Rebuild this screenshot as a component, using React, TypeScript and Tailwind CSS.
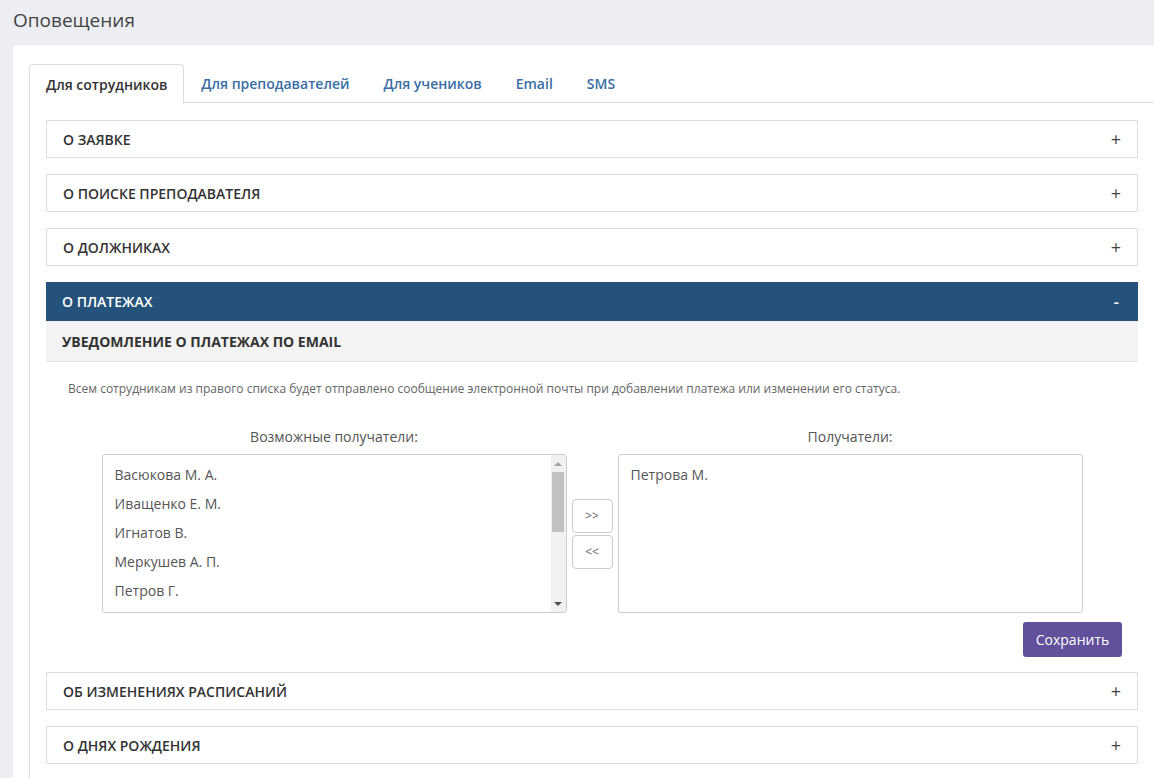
import React from "react";

// Настройки оповещений: вкладки, аккордеон с разделами и двойной список получателей.

const TABS = ["Для сотрудников", "Для преподавателей", "Для учеников", "Email", "SMS"];

const AVAILABLE = ["Васюкова М. А.", "Иващенко Е. М.", "Игнатов В.", "Меркушев А. П.", "Петров Г."];
const SELECTED = ["Петрова М."];

function Collapsed({ title }: { title: string }) {
  return (
    <div className="flex h-[38px] items-center justify-between border border-[#dddddd] bg-white pl-4 pr-[16px]">
      <span className="text-[14px] font-semibold uppercase text-[#333333]">{title}</span>
      <span className="text-[18px] leading-none text-[#444444]">+</span>
    </div>
  );
}

// Список с отрисованной полосой прокрутки справа
function ListBox({ items, scroll }: { items: string[]; scroll?: boolean }) {
  return (
    <div className="flex h-[159px] w-[465px] overflow-hidden rounded-[3px] border border-[#cccccc] bg-white">
      <ul className="flex-1 pl-3 pt-[8px]">
        {items.map((item) => (
          <li key={item} className="h-[29px] text-[14px] leading-[24px] text-[#555555]">
            {item}
          </li>
        ))}
      </ul>
      {scroll && (
        <div className="flex w-[15px] flex-col bg-[#f1f1f1]">
          <div className="flex h-[17px] items-center justify-center">
            <span className="h-0 w-0 border-x-[4px] border-b-[4px] border-x-transparent border-b-[#a3a3a3]" />
          </div>
          <div className="mx-auto h-[60px] w-[12px] bg-[#c1c1c1]" />
          <div className="flex-1" />
          <div className="flex h-[17px] items-center justify-center">
            <span className="h-0 w-0 border-x-[4px] border-t-[4px] border-x-transparent border-t-[#505050]" />
          </div>
        </div>
      )}
    </div>
  );
}

function PaymentsPanel() {
  return (
    <div className="-mb-px">
      <div className="flex h-[39px] items-center justify-between bg-[#24527a] pl-4 pr-[19px]">
        <span className="text-[14px] font-semibold uppercase text-white">О платежах</span>
        <span className="text-[16px] font-semibold leading-none text-white">-</span>
      </div>
      <div className="flex h-[41px] items-center border-b border-[#e5e5e5] bg-[#f3f3f3] pl-4">
        <span className="text-[14px] font-bold uppercase text-[#333333]">Уведомление о платежах по email</span>
      </div>
      <p className="pl-[22px] pt-[18px] text-[12px] leading-[18px] text-[#666666]">
        Всем сотрудникам из правого списка будет отправлено сообщение электронной почты при добавлении платежа или изменении его статуса.
      </p>

      <div className="mt-[30px] flex justify-center gap-[5px]">
        <div className="flex flex-col items-center">
          <span className="mb-[8px] text-[14px] leading-[18px] text-[#555555]">Возможные получатели:</span>
          <ListBox items={AVAILABLE} scroll />
        </div>
        <div className="flex flex-col justify-end">
          <div className="flex h-[159px] flex-col justify-center gap-[2px]">
            <button className="h-[34px] w-[41px] rounded-[4px] border border-[#cccccc] bg-white text-[12px] text-[#666666]">
              &gt;&gt;
            </button>
            <button className="h-[34px] w-[41px] rounded-[4px] border border-[#cccccc] bg-white text-[12px] text-[#666666]">
              &lt;&lt;
            </button>
          </div>
        </div>
        <div className="flex flex-col items-center">
          <span className="mb-[8px] text-[14px] leading-[18px] text-[#555555]">Получатели:</span>
          <ListBox items={SELECTED} />
        </div>
      </div>

      <div className="flex justify-end pr-4 pt-[9px]">
        <button className="h-[35px] w-[99px] rounded-[3px] bg-[#62509c] text-[14px] text-white">Сохранить</button>
      </div>
    </div>
  );
}

export default function App() {
  return (
    <div
      className="min-h-screen overflow-hidden bg-[#eceef3]"
      style={{ fontFamily: '"Open Sans", "Noto Sans", sans-serif' }}
    >
      <h1 className="h-[45px] pl-[13px] pt-[6px] text-[19px] font-normal leading-[28px] text-[#444444]">Оповещения</h1>

      <div className="ml-[13px] min-h-[733px] w-[1141px] rounded-tl-[4px] bg-white pl-4 pt-[19px]">
        {/* вкладки */}
        <div className="flex h-[39px] border-b border-[#dddddd]">
          {TABS.map((tab, i) =>
            i === 0 ? (
              <div
                key={tab}
                className="-mb-px flex h-[39px] items-center rounded-t-[4px] border border-b-0 border-[#dddddd] bg-white px-4 text-[14px] font-semibold text-[#333333]"
              >
                {tab}
              </div>
            ) : (
              <div key={tab} className="flex items-center px-[17px] text-[14px] font-semibold text-[#3a6ea5]">
                {tab}
              </div>
            )
          )}
        </div>

        {/* содержимое вкладки */}
        <div className="flex flex-col gap-4 border-l border-[#dddddd] pb-6 pl-4 pr-4 pt-[17px]">
          <Collapsed title="О заявке" />
          <Collapsed title="О поиске преподавателя" />
          <Collapsed title="О должниках" />
          <PaymentsPanel />
          <Collapsed title="Об изменениях расписаний" />
          <Collapsed title="О днях рождения" />
        </div>
      </div>
    </div>
  );
}
